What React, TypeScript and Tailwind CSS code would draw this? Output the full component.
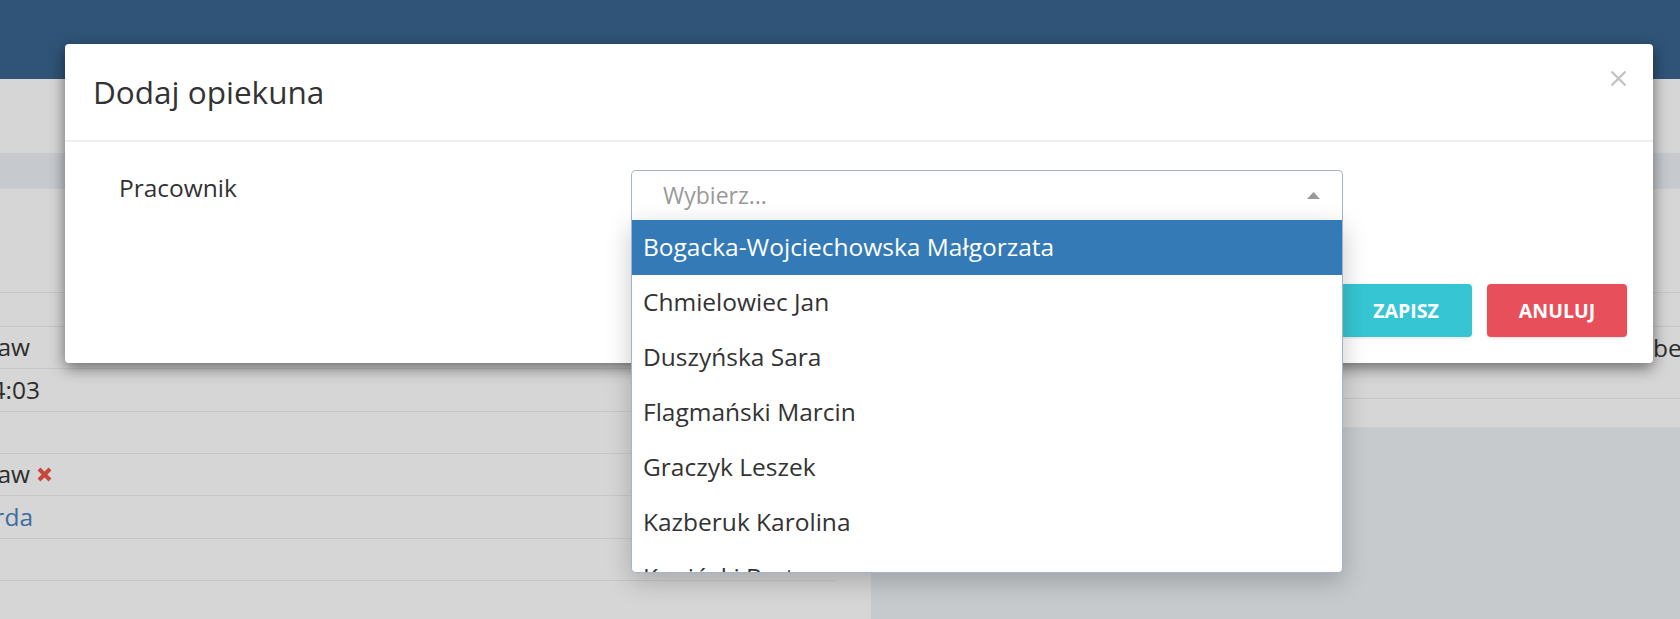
import React from "react";

const PEOPLE = [
  "Bogacka-Wojciechowska Małgorzata",
  "Chmielowiec Jan",
  "Duszyńska Sara",
  "Flagmański Marcin",
  "Graczyk Leszek",
  "Kazberuk Karolina",
  "Koniński Bartosz",
  "Kowalczyk Anna",
];

type Row = { h: string; text?: string; w?: string; tail?: "x"; link?: boolean };

// rows of the table behind the backdrop, only their right ends are visible
const LEFT_ROWS: Row[] = [
  { h: "h-[104px]" },
  { h: "h-[34px]" },
  { h: "h-[42px]", text: "Jarosław Bugaraw", w: "w-[30px]" },
  { h: "h-[43px]", text: "2019-05-14 14:03", w: "w-[40px]" },
  { h: "h-[42px]" },
  { h: "h-[42px]", text: "Jarosław Bugaraw", w: "w-[30px]", tail: "x" },
  { h: "h-[43px]", text: "Bednarek Ryszarda", w: "w-[33px]", link: true },
  { h: "h-[42px]" },
];

function Caret() {
  return (
    <svg width="13" height="7" viewBox="0 0 13 7" className="shrink-0">
      <polygon points="0,7 6.5,0 13,7" fill="#999" />
    </svg>
  );
}

function CloseIcon() {
  return (
    <svg width="17" height="17" viewBox="0 0 17 17">
      <path d="M1.5 1.5 L15.5 15.5 M15.5 1.5 L1.5 15.5" stroke="#c4c4c4" strokeWidth="2.4" fill="none" />
    </svg>
  );
}

function RedX() {
  return (
    <svg width="15" height="15" viewBox="0 0 15 15" className="ml-[7px] shrink-0">
      <path d="M2 2 L13 13 M13 2 L2 13" stroke="#c8473d" strokeWidth="4" fill="none" />
    </svg>
  );
}

export default function App() {
  return (
    <div className="relative h-[619px] w-full overflow-hidden bg-[#c7cacd] font-['Open_Sans',sans-serif] text-[24.5px] text-[#2c2c2c]">
      {/* page behind the backdrop */}
      <div className="h-[79px] bg-[#2f5477]" />
      <div className="flex items-start">
        <div className="h-[540px] w-[871px] shrink-0 bg-[#d6d6d6]">
          <div className="h-[74px]" />
          <div className="h-[36px] w-[835px] bg-[#c6cacf]" />
          {LEFT_ROWS.map((r, i) => (
            <div key={i} className={`flex w-[835px] items-center border-b border-[#c4c8cc] ${r.h}`}>
              {r.text && (
                <div className="flex items-center">
                  <div className={`flex justify-end overflow-hidden whitespace-nowrap ${r.w} ${r.link ? "text-[#3a6e9e]" : ""}`}>
                    {r.text}
                  </div>
                  {r.tail === "x" && <RedX />}
                </div>
              )}
            </div>
          ))}
        </div>
        <div className="ml-[15px] h-[348px] flex-1 bg-[#d6d6d6]">
          <div className="h-[74px]" />
          <div className="h-[36px] bg-[#c6cacf]" />
          <div className="h-[104px] border-b border-[#c4c8cc]" />
          <div className="h-[34px] border-b border-[#c4c8cc]" />
          <div className="h-[72px] whitespace-nowrap border-b border-[#c4c8cc] pl-[767px] pt-[3px]">bez</div>
        </div>
      </div>

      {/* modal */}
      <div className="absolute left-[65px] top-[44px] w-[1588px] rounded-[4px] bg-white text-[#333] shadow-[0_5px_15px_rgba(0,0,0,0.5)]">
        <div className="relative flex h-[98px] items-center border-b-2 border-[#efefef] pl-[28px]">
          <h4 className="text-[31.5px] font-normal leading-none">Dodaj opiekuna</h4>
          <button type="button" className="absolute right-[26px] top-[26px]">
            <CloseIcon />
          </button>
        </div>
        <div className="px-[26px] pb-[26px] pt-[28px]">
          <div className="flex items-start">
            <label className="w-[540px] shrink-0 pl-[28px] leading-[35px]">Pracownik</label>
            <div className="relative z-10 w-[712px]">
              <div className="flex h-[50px] items-center justify-between rounded-t-[5px] border border-b-0 border-[#a4b4cf] bg-white pl-[31px] pr-[22px]">
                <span className="text-[23px] text-[#999]">Wybierz...</span>
                <Caret />
              </div>
              <div className="absolute left-0 right-0 top-full h-[353px] overflow-hidden rounded-b-[5px] border border-t-0 border-[#a4b4cf] bg-white shadow-[0_8px_26px_rgba(0,0,0,0.22)]">
                {PEOPLE.map((p, i) => (
                  <div
                    key={p}
                    className={`flex h-[55px] items-center whitespace-nowrap pl-[11px] ${i === 0 ? "bg-[#337ab7] text-white" : "text-[#333]"}`}
                  >
                    {p}
                  </div>
                ))}
              </div>
            </div>
          </div>
          <div className="mt-[64px] flex justify-end gap-[15px]">
            <button type="button" className="h-[53px] w-[132px] rounded-[4px] bg-[#36c6d3] text-[19.5px] font-bold text-white shadow-[0_1px_3px_rgba(0,0,0,0.12)]">
              ZAPISZ
            </button>
            <button type="button" className="h-[53px] w-[140px] rounded-[4px] bg-[#e7505a] text-[19.5px] font-bold text-white shadow-[0_1px_3px_rgba(0,0,0,0.12)]">
              ANULUJ
            </button>
          </div>
        </div>
      </div>
    </div>
  );
}
